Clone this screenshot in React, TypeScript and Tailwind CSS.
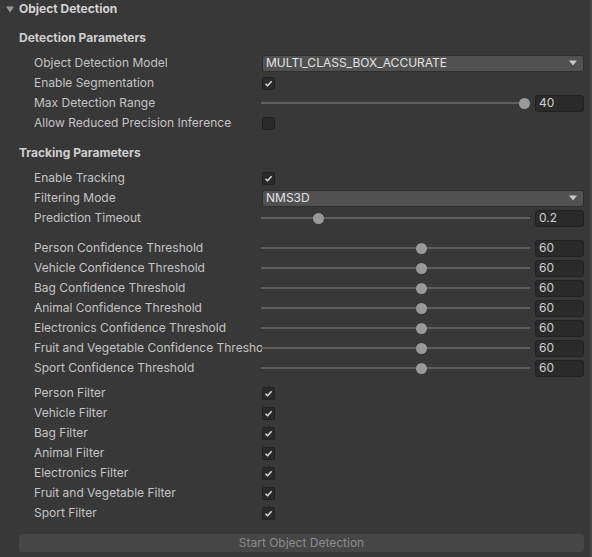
import React from "react";

function Check() {
  return (
    <div className="w-[13px] h-[13px] rounded-[2px] bg-[#2a2a2a] border border-[#212121] flex items-center justify-center">
      <svg width="9" height="9" viewBox="0 0 9 9">
        <path d="M1.5 4.8 L3.6 6.8 L7.6 2.2" fill="none" stroke="#e0e0e0" strokeWidth="1.4" />
      </svg>
    </div>
  );
}

function Empty() {
  return <div className="w-[13px] h-[13px] rounded-[2px] bg-[#2a2a2a] border border-[#212121]" />;
}

function Dropdown({ value }: { value: string }) {
  return (
    <div className="flex-1 h-[17px] rounded-[3px] bg-[#515151] border border-[#2e2e2e] flex items-center justify-between pl-[3px] pr-[6px] text-[#e2e2e2]">
      <span>{value}</span>
      <svg width="8" height="6" viewBox="0 0 8 6">
        <path d="M0 0.5 L8 0.5 L4 5.5 Z" fill="#c8c8c8" />
      </svg>
    </div>
  );
}

function Slider({ frac, value }: { frac: number; value: string }) {
  return (
    <div className="flex-1 flex items-center gap-[5px] h-full">
      <div className="relative flex-1 h-full ml-[-1px]">
        <div className="absolute left-0 right-0 top-1/2 h-[2px] -mt-[1px] bg-[#5e5e5e]" />
        <div
          className="absolute top-1/2 -mt-[5.5px] w-[11px] h-[11px] rounded-full bg-[#999999]"
          style={{ left: `calc(${frac} * (100% - 11px))` }}
        />
      </div>
      <div className="w-[49px] h-[17px] rounded-[3px] bg-[#2a2a2a] border border-[#212121] flex items-center pl-[3px] text-[#d0d0d0]">
        {value}
      </div>
    </div>
  );
}

function LabelRow({ label, children }: { label: string; children: React.ReactNode }) {
  return (
    <div className="h-5 flex items-center pr-[6px]">
      <div className="w-[228px] ml-[34px] shrink-0 whitespace-nowrap overflow-hidden text-[#c4c4c4]">{label}</div>
      <div className="flex-1 flex items-center h-full">{children}</div>
    </div>
  );
}

export default function App() {
  const thresholds = [
    "Person Confidence Threshold",
    "Vehicle Confidence Threshold",
    "Bag Confidence Threshold",
    "Animal Confidence Threshold",
    "Electronics Confidence Threshold",
    "Fruit and Vegetable Confidence Threshold",
    "Sport Confidence Threshold",
  ];
  const filters = [
    "Person Filter",
    "Vehicle Filter",
    "Bag Filter",
    "Animal Filter",
    "Electronics Filter",
    "Fruit and Vegetable Filter",
    "Sport Filter",
  ];

  return (
    <div className="w-[592px] h-[557px] bg-[#383838] flex text-[12px] font-['Inter','Liberation_Sans',sans-serif] overflow-hidden">
      <div className="flex-1 flex flex-col pt-px">
        <div className="h-4 flex items-center pl-[6px] gap-[5px]">
          <svg width="8" height="7" viewBox="0 0 8 7">
            <path d="M0 0.5 L8 0.5 L4 6.5 Z" fill="#9a9a9a" />
          </svg>
          <span className="font-bold text-[#d4d4d4]">Object Detection</span>
        </div>

        <div className="h-5 mt-[11px] mb-[5px] pl-[19px] flex items-center font-bold text-[#cfcfcf]">
          Detection Parameters
        </div>
        <LabelRow label="Object Detection Model">
          <Dropdown value="MULTI_CLASS_BOX_ACCURATE" />
        </LabelRow>
        <LabelRow label="Enable Segmentation">
          <Check />
        </LabelRow>
        <LabelRow label="Max Detection Range">
          <Slider frac={1} value="40" />
        </LabelRow>
        <LabelRow label="Allow Reduced Precision Inference">
          <Empty />
        </LabelRow>

        <div className="h-5 mt-[10px] mb-[5px] pl-[19px] flex items-center font-bold text-[#cfcfcf]">
          Tracking Parameters
        </div>
        <LabelRow label="Enable Tracking">
          <Check />
        </LabelRow>
        <LabelRow label="Filtering Mode">
          <Dropdown value="NMS3D" />
        </LabelRow>
        <LabelRow label="Prediction Timeout">
          <Slider frac={0.2} value="0.2" />
        </LabelRow>

        <div className="h-[10px]" />
        {thresholds.map((t) => (
          <LabelRow key={t} label={t}>
            <Slider frac={0.6} value="60" />
          </LabelRow>
        ))}

        <div className="h-[5px]" />
        {filters.map((f) => (
          <LabelRow key={f} label={f}>
            <Check />
          </LabelRow>
        ))}

        <div className="mt-[11px] ml-[19px] mr-[6px] h-[18px] rounded-[3px] bg-[#464646] flex items-center justify-center text-[#8c8c8c]">
          Start Object Detection
        </div>
      </div>
      <div className="w-[2px] bg-[#474747]" />
    </div>
  );
}
